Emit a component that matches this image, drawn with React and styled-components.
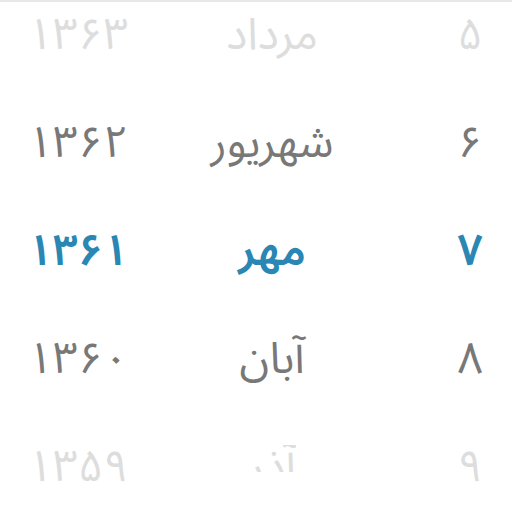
import React from "react";
import styled, { createGlobalStyle } from "styled-components";

const Global = createGlobalStyle`
  html, body { margin: 0; padding: 0; background: #fff; }
  body { width: 512px; height: 512px; overflow: hidden; }
`;

const Wheel = styled.div`
  width: 512px;
  height: 512px;
  box-sizing: border-box;
  border-top: 2px solid #e8e8e8;
  overflow: hidden;
  display: flex;
  flex-direction: column;
  font-family: "Noto Sans Arabic", "DejaVu Sans", sans-serif;
`;

const Row = styled.div`
  display: grid;
  grid-template-columns: 156px 232px 124px;
  box-sizing: border-box;
  height: ${(p) => (p.$first ? 87 : 108)}px;
  padding-top: ${(p) => (p.$first ? 11 : 32)}px;
  align-items: start;
  flex: none;
  color: ${(p) => p.$color};
  font-weight: ${(p) => (p.$bold ? 600 : 400)};
  font-size: 44px;
`;

const Cell = styled.div`
  text-align: center;
  direction: rtl;
  padding-left: ${(p) => p.$pl || 0}px;
  line-height: 44px;
  height: 44px;
`;

const Clip = styled.span`
  display: inline-block;
  height: ${(p) => p.$h}px;
  overflow: hidden;
  vertical-align: top;
`;

const rows = [
  { year: "۱۳۶۳", month: "مرداد", day: "۵", color: "#dddddd" },
  { year: "۱۳۶۲", month: "شهریور", day: "۶", color: "#787878" },
  { year: "۱۳۶۱", month: "مهر", day: "۷", color: "#2a86b3", bold: true },
  { year: "۱۳۶۰", month: "آبان", day: "۸", color: "#787878" },
  { year: "۱۳۵۹", month: "آذر", day: "۹", color: "#dddddd", clip: 27 },
];

export default function App() {
  return (
    <>
      <Global />
      <Wheel>
        {rows.map((r, i) => (
          <Row key={i} $first={i === 0} $color={r.color} $bold={r.bold}>
            <Cell>{r.year}</Cell>
            <Cell>{r.clip ? <Clip $h={r.clip}>{r.month}</Clip> : r.month}</Cell>
            <Cell $pl={40}>{r.day}</Cell>
          </Row>
        ))}
      </Wheel>
    </>
  );
}
